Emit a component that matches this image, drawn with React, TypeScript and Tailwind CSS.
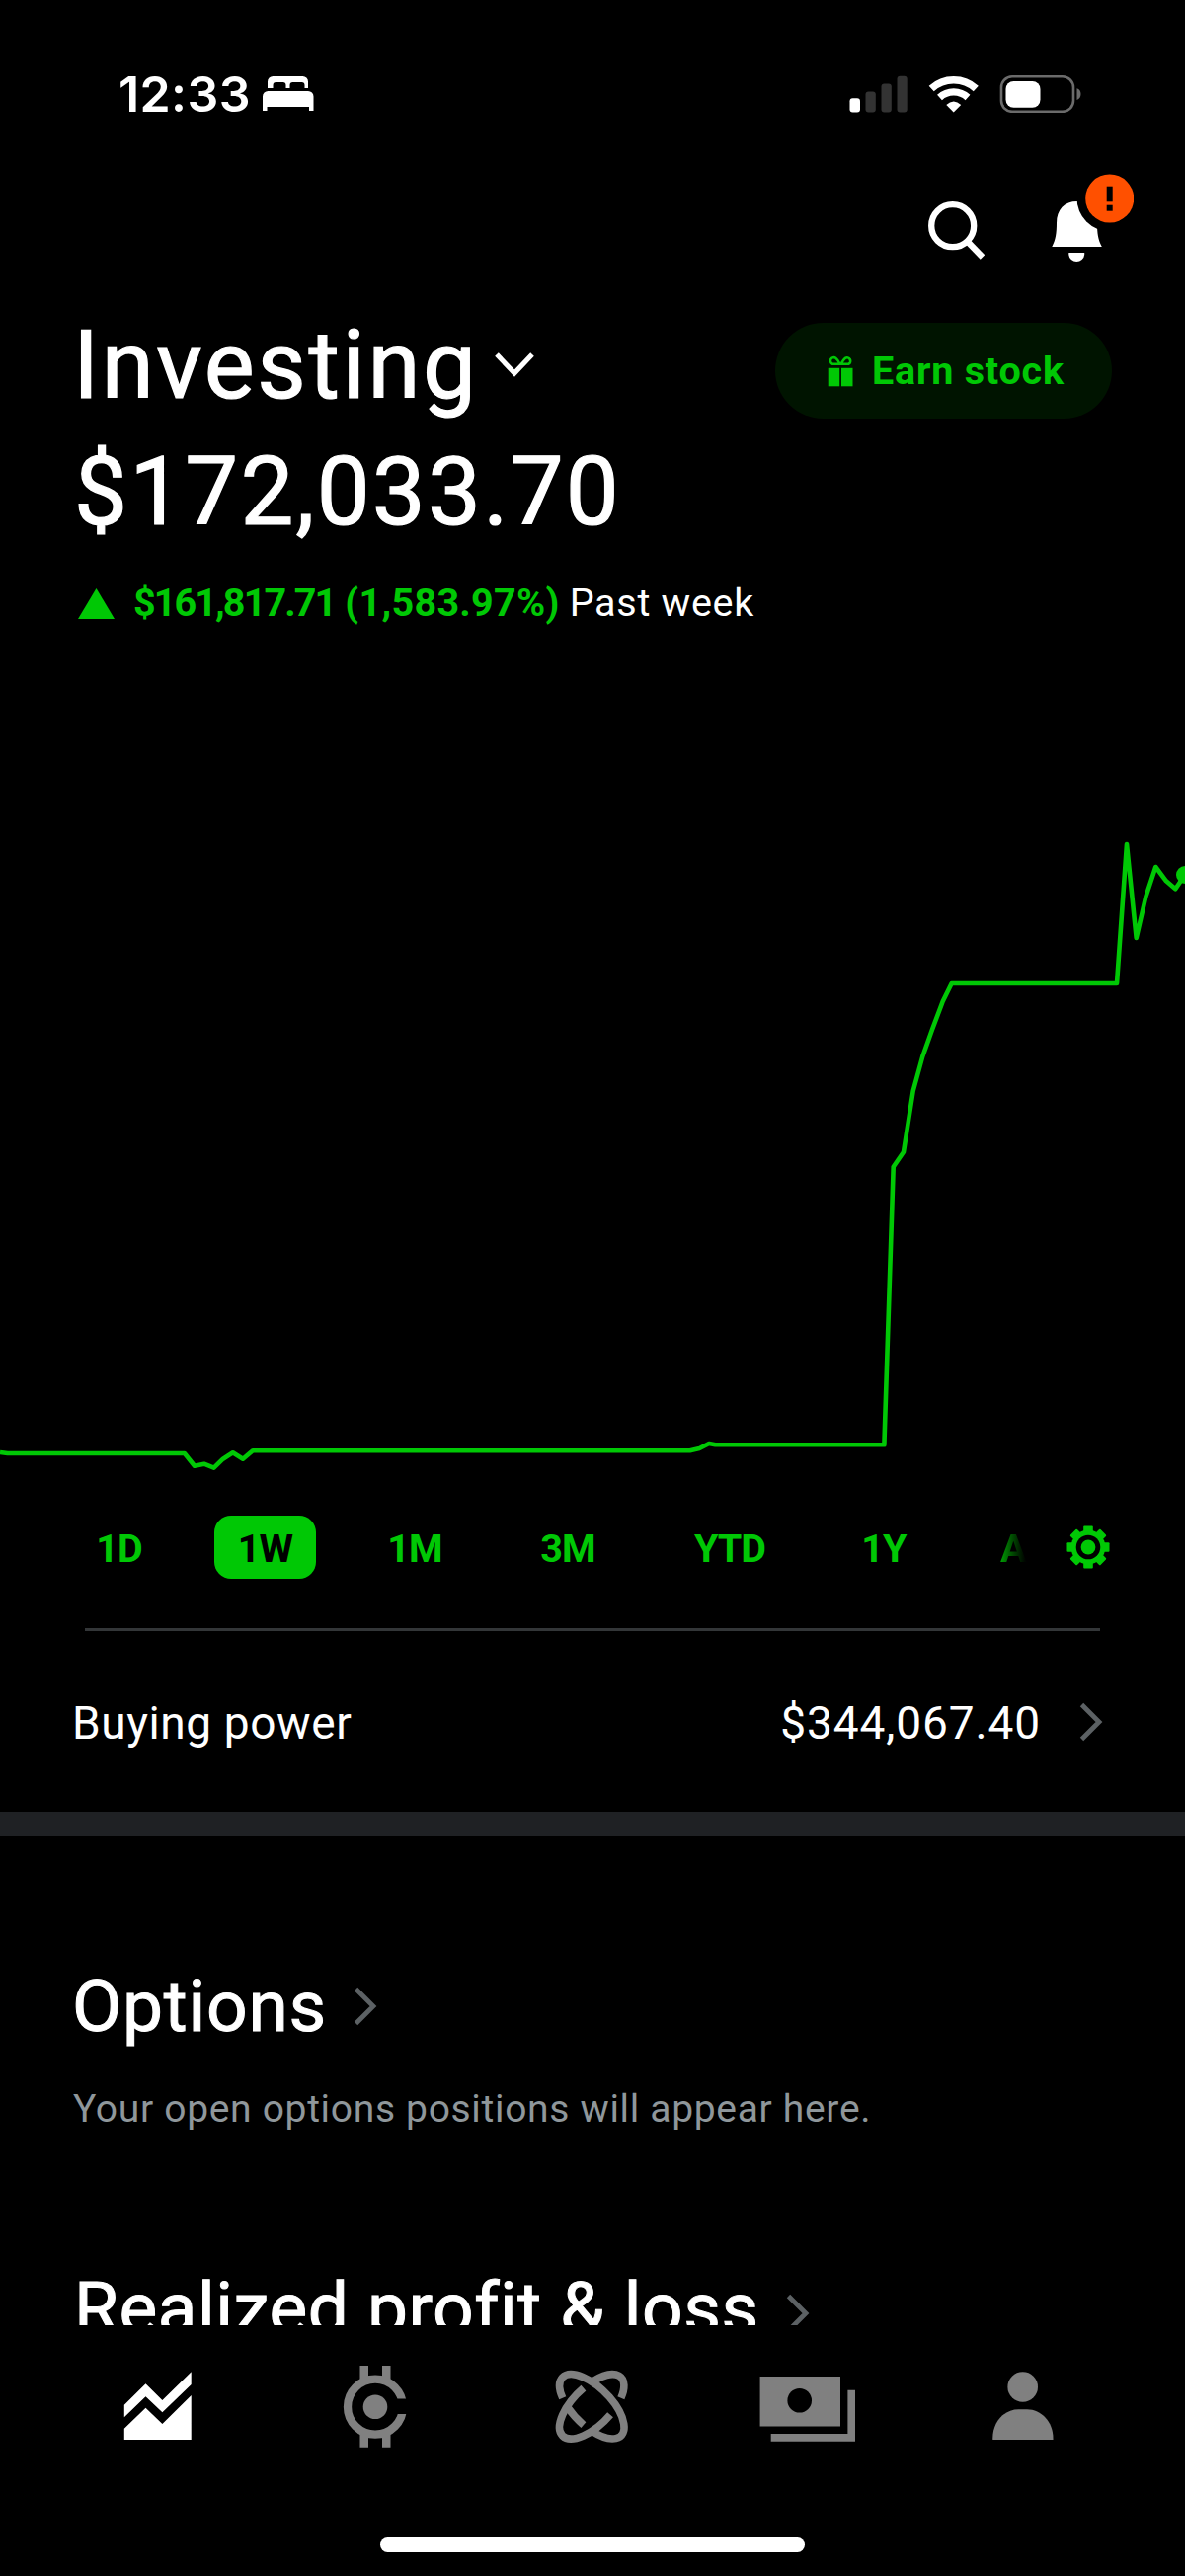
import { useState } from "react";

type Range = { label: string; width: string };

const RANGES: Range[] = [
  { label: "1D", width: "w-[93px]" },
  { label: "1W", width: "w-[103px]" },
  { label: "1M", width: "w-[100px]" },
  { label: "3M", width: "w-[110px]" },
  { label: "YTD", width: "w-[118px]" },
  { label: "1Y", width: "w-[94px]" },
];

const CHART_POINTS =
  "0,1471 7.7,1472 186.8,1472 197,1484.7 206.7,1482.7 216.6,1486.7 225.8,1477.7 235.8,1471.3 246,1477.7 256,1469.3 " +
  "698.7,1469.3 708.3,1467 718,1462 724.4,1463.3 895.4,1463.3 904.7,1181.7 915,1166.7 924.7,1105 934.3,1070 944,1042.7 " +
  "954.7,1014.3 963.7,996 1131,996 1141,855 1150.7,950 1160.3,908.3 1170.3,878 1181,892.3 1190.3,900.3 1200,886";

function StatusBar() {
  return (
    <div className="mt-[45px] h-[100px] flex items-center justify-between pl-[120px] pr-[104px]">
      <div className="flex items-center gap-[12px]">
        <span className="font-['Inter',sans-serif] font-semibold text-[50px] leading-none tracking-[0.4px]">12:33</span>
        <svg width="52" height="36" viewBox="0 0 52 36" fill="#fff">
          <path d="M5 12V5.5A5.5 5.5 0 0 1 10.5 0H40.5A5.5 5.5 0 0 1 46 5.5V12H42.5V9A3 3 0 0 0 39.5 6H30.5A3 3 0 0 0 27.5 9V12H23.5V9A3 3 0 0 0 20.5 6H13.5A3 3 0 0 0 10.5 9V12Z" />
          <path d="M0 35V20.5A5.5 5.5 0 0 1 5.5 15H46A5.5 5.5 0 0 1 51.5 20.5V35H47V31H4.5V35Z" />
        </svg>
      </div>
      <div className="flex items-center">
        {/* Cell signal */}
        <svg width="59" height="38" viewBox="0 0 59 38" fill="#333">
          <rect x="0.5" y="23.3" width="10.5" height="14.2" rx="3" fill="#fff" />
          <rect x="16.5" y="16.5" width="10.3" height="21" rx="3" />
          <rect x="32.5" y="8.5" width="10.3" height="29" rx="3" />
          <rect x="48.5" y="0.7" width="10.2" height="36.8" rx="3" />
        </svg>
        {/* Wifi */}
        <svg className="ml-[21px]" width="52" height="38" viewBox="0 0 52 38" fill="none" stroke="#fff">
          <path d="M3.2 13.5A33.5 33.5 0 0 1 48.3 13.5" strokeWidth="7.5" />
          <path d="M11.5 22.5A21 21 0 0 1 40 22.5" strokeWidth="7.2" />
          <path d="M25.7 37.5L18.3 30Q25.7 22.8 33.2 30Z" fill="#fff" stroke="none" />
        </svg>
        {/* Battery */}
        <svg className="ml-5" width="84" height="38" viewBox="0 0 84 38">
          <rect x="2" y="1.3" width="73" height="35.5" rx="11" fill="none" stroke="#6b6b6b" strokeWidth="2.6" />
          <rect x="6.5" y="6" width="35" height="26.8" rx="8" fill="#fff" />
          <path d="M78.5 13.2Q82.5 14.5 82.5 19T78.5 25Z" fill="#6b6b6b" />
        </svg>
      </div>
    </div>
  );
}

function TopActions() {
  return (
    <div className="h-[123px] flex items-end justify-end gap-[67px] pr-[52px]">
      <svg width="57" height="64" viewBox="0 0 57 64" fill="none" stroke="#fff" strokeWidth="6.3">
        <circle cx="24.7" cy="24.7" r="21.5" />
        <path d="M39.5 40.5L55 56.5" />
      </svg>
      <svg width="84" height="92" viewBox="0 0 84 92">
        <path d="M1.3 74C5 67 6 60 6 50C6 36 14 28 26.7 28C39.4 28 47 36 47 50C47 60 48 67 51.8 74Z" fill="#fff" />
        <path d="M18.3 80H34.2V82A8 8 0 0 1 18.3 82Z" fill="#fff" />
        {/* Alert badge, with a black ring cut out of the bell */}
        <circle cx="59.7" cy="25" r="33.2" />
        <circle cx="59.7" cy="25" r="24.5" fill="#ff5000" />
        <rect x="56.7" y="12.7" width="6" height="15.6" />
        <rect x="56.7" y="31.7" width="6" height="6" />
      </svg>
    </div>
  );
}

function GiftIcon() {
  return (
    <svg width="27" height="32" viewBox="0 0 27 32" fill="#00c805">
      <rect x="0.7" y="12.8" width="11.5" height="18.5" />
      <rect x="14" y="12.8" width="11.5" height="18.5" />
      <path
        d="M12.5 8.7H5A3.4 3.4 0 1 1 8.3 2.8Q10.5 4.5 12.5 8.7ZM13.7 8.7H21.5A3.4 3.4 0 1 0 18 2.8Q16 4.5 13.7 8.7Z"
        fill="none"
        stroke="#00c805"
        strokeWidth="2.6"
      />
    </svg>
  );
}

function Chevron({ className = "" }: { className?: string }) {
  return (
    <svg className={className} width="24" height="40" viewBox="0 0 24 40" fill="none" stroke="#5c6164" strokeWidth="4.8">
      <path d="M2.5 2.5L20 20L2.5 37.5" />
    </svg>
  );
}

function GearIcon() {
  return (
    <svg width="44" height="50" viewBox="-22 -25 44 50" fill="#00c805">
      {[0, 45, 90, 135].map((deg) => (
        <rect key={deg} x="-4.8" y="-21.5" width="9.6" height="43" rx="1" transform={`rotate(${deg})`} />
      ))}
      <circle r="17.4" />
      <circle r="12.3" fill="#000" />
      <circle r="7.4" />
    </svg>
  );
}

function NavIcon({ children, fill = "#808080" }: { children: React.ReactNode; fill?: string }) {
  return (
    <button className="flex justify-center">
      <svg width="99" height="99" viewBox="0 0 99 99" fill={fill}>
        {children}
      </svg>
    </button>
  );
}

function TabBar() {
  return (
    <nav className="h-[254px] pt-[33px] bg-black">
      <div className="grid grid-cols-5 w-[1095px] ml-[51px]">
        <NavIcon fill="#fff">
          <path d="M14.8 47.7L36.5 26.3L53.4 43L82.7 14.3V27L53.4 55.3L36.5 39.2L14.8 60.3Z" />
          <path d="M14.8 71.8L36.5 50.7L53.4 67L82.7 38V83H14.8Z" />
        </NavIcon>
        <NavIcon>
          <circle cx="50" cy="49.7" r="28" fill="none" stroke="#808080" strokeWidth="8.3" />
          <rect x="70" y="41.5" width="16" height="15.5" fill="#000" />
          <circle cx="50" cy="49.7" r="12.3" />
          <path d="M34.5 8H43V24H34.5ZM57 8H65.5V24H57ZM34.5 76H43V90.7H34.5ZM57 76H65.5V90.7H57Z" />
        </NavIcon>
        <NavIcon>
          <g transform="translate(50.3 49.3)" fill="none" stroke="#808080" strokeWidth="7.6">
            <g transform="rotate(45)">
              <path d="M-26.9 14.9A41.9 19.5 0 1 1 17 17.8" />
              <path d="M7.3 19.2A41.9 19.5 0 0 1 -16.4 17.95" />
            </g>
            <g transform="rotate(-45)">
              <path d="M7.3 19.2A41.9 19.5 0 1 1 7.3 -19.2" />
              <path d="M18.4 -17.5A41.9 19.5 0 0 1 26.9 14.9" />
            </g>
          </g>
        </NavIcon>
        <NavIcon>
          <rect x="1.6" y="19" width="81.4" height="50.5" />
          <circle cx="41.7" cy="43.3" r="12.3" fill="#000" />
          <path d="M90.4 32.7H98V84.7H12.7V77H90.4Z" />
        </NavIcon>
        <NavIcon>
          <circle cx="48.7" cy="29.5" r="15.3" />
          <path d="M18.3 83V81.5C18.3 65 30 52.3 44.5 52.3H53C67.5 52.3 79.5 65 79.5 81.5V83Z" />
        </NavIcon>
      </div>
      <div className="mx-auto mt-[83px] w-[430px] h-[15px] rounded-full bg-white" />
    </nav>
  );
}

export default function App() {
  const [range, setRange] = useState("1W");

  return (
    <div className="w-[1200px] h-[2609px] bg-black text-white font-['Roboto',sans-serif] overflow-hidden">
      <main className="h-[2355px] overflow-hidden flex flex-col *:shrink-0">
        <StatusBar />
        <TopActions />

        {/* Portfolio header */}
        <div className="mt-[42px] h-[120px] flex items-center justify-between pl-[74px] pr-[74px]">
          <h1 className="flex items-center text-[96px] leading-[120px] tracking-[2.6px] [-webkit-text-stroke:1.2px_white]">
            Investing
            <svg className="ml-[16px] -mt-[3px]" width="40" height="28" viewBox="0 0 40 28" fill="none" stroke="#fff" strokeWidth="5">
              <path d="M2 4L20 23L38 4" />
            </svg>
          </h1>
          <button className="mt-[11px] w-[341px] h-[97px] rounded-full bg-[#001400] flex items-center pl-[53px] gap-[18px] text-[#00c805] text-[39.5px] font-bold tracking-[0.8px] whitespace-nowrap">
            <GiftIcon />
            Earn stock
          </button>
        </div>
        <div className="h-[136px] pl-[75px] text-[96px] leading-[136px] tracking-[2.2px] [-webkit-text-stroke:1.2px_white]">
          $172,033.70
        </div>
        <div className="h-[90px] pl-[79px] flex items-center text-[39.5px] whitespace-nowrap">
          <svg width="37" height="31" viewBox="0 0 37 31" fill="#00c805">
            <path d="M18.5 0L37 31H0Z" />
          </svg>
          <span className="ml-[19px] font-bold text-[#00c805] tracking-[0.3px]">
            <span className="tracking-[-1.9px]">$161,817.71</span> (1,583.97%)
          </span>
          <span className="ml-[10px] tracking-[0.7px]">Past week</span>
        </div>

        {/* Performance chart */}
        <svg width="1200" height="879" viewBox="0 656 1200 879">
          <polyline points={CHART_POINTS} fill="none" stroke="#00c805" strokeWidth="4.6" strokeLinejoin="round" />
          <circle cx="1200" cy="886" r="9" fill="#00c805" />
        </svg>

        <div className="h-[64px] flex items-center pl-[74px] text-[39.5px] font-bold tracking-[-0.9px] text-[#00c805]">
          <div className="flex gap-[50px]">
            {RANGES.map((r) => (
              <button
                key={r.label}
                onClick={() => setRange(r.label)}
                className={`h-[64px] pt-[3px] rounded-[17px] text-center ${r.width} ${
                  range === r.label ? "bg-[#00c805] text-black" : ""
                }`}
              >
                {r.label}
              </button>
            ))}
          </div>
          {/* Next range fades out under the settings button */}
          <span className="ml-[71px] mt-[3px] w-[67px] bg-linear-to-r from-[#00a004] to-black to-45% bg-clip-text text-transparent">
            A
          </span>
          <GearIcon />
        </div>
        <div className="mt-[50px] mx-[86px] h-[3px] bg-[#333638]" />

        {/* Buying power */}
        <div className="h-[183px] pt-[3px] pl-[73px] pr-[83px] flex items-center text-[46px]">
          <span className="tracking-[0.6px]">Buying power</span>
          <span className="ml-auto tracking-[0.9px]">$344,067.40</span>
          <Chevron className="ml-[39px] -mt-[3px]" />
        </div>
        <div className="h-[25px] bg-[#1f2124]" />

        {/* Positions */}
        <h2 className="mt-[123px] h-[100px] pl-[73px] flex items-center text-[73px] tracking-[0.8px] [-webkit-text-stroke:1px_white]">
          Options
          <Chevron className="ml-[27px] -mt-[3px]" />
        </h2>
        <p className="h-[106px] leading-[106px] pl-[74px] text-[39px] tracking-[0.68px] text-[#8f979b]">
          Your open options positions will appear here.
        </p>
        <h2 className="mt-[100px] h-[100px] pl-[75px] flex items-center text-[73px] tracking-[0.5px] [-webkit-text-stroke:1px_white]">
          Realized profit &amp; loss
          <Chevron className="ml-[27px] mt-2" />
        </h2>
      </main>
      <TabBar />
    </div>
  );
}
